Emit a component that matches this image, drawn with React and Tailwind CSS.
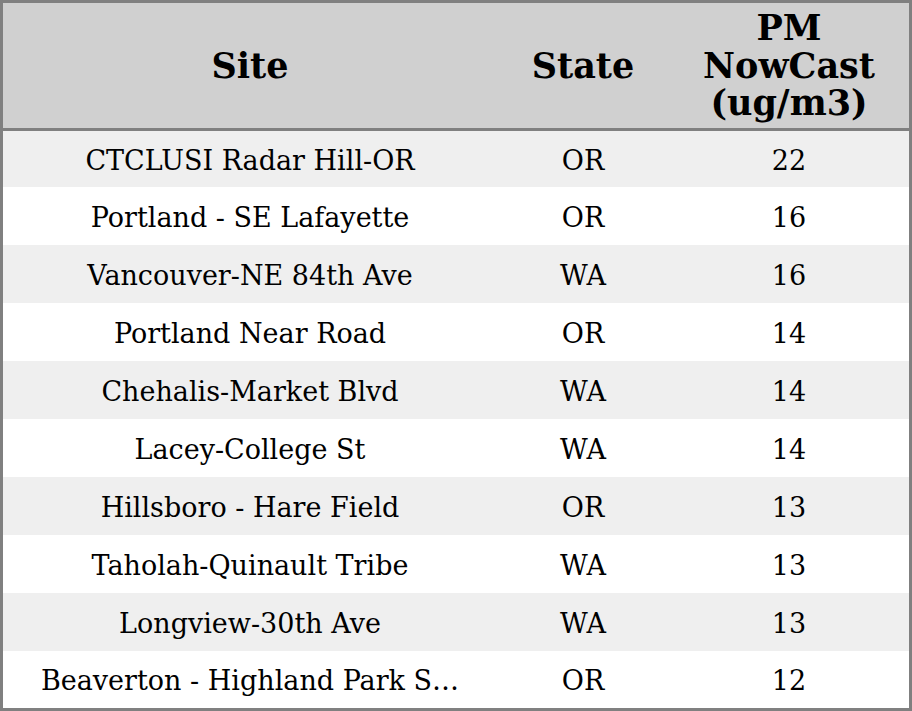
import React from "react";

const rows = [
  ["CTCLUSI Radar Hill-OR", "OR", "22"],
  ["Portland - SE Lafayette", "OR", "16"],
  ["Vancouver-NE 84th Ave", "WA", "16"],
  ["Portland Near Road", "OR", "14"],
  ["Chehalis-Market Blvd", "WA", "14"],
  ["Lacey-College St", "WA", "14"],
  ["Hillsboro - Hare Field", "OR", "13"],
  ["Taholah-Quinault Tribe", "WA", "13"],
  ["Longview-30th Ave", "WA", "13"],
  ["Beaverton - Highland Park S…", "OR", "12"],
];

const heights = ["h-[56px]", "h-[58px]", "h-[58px]", "h-[58px]", "h-[58px]", "h-[58px]", "h-[58px]", "h-[58px]", "h-[58px]", "h-[57px]"];

export default function App() {
  return (
    <div className="w-[912px] h-[711px] border-[3px] border-[#808080] bg-white text-black font-['DejaVu_Serif',serif] overflow-hidden">
      <div className="grid grid-cols-[494px_172px_240px] h-[128px] bg-[#d0d0d0] border-b-[3px] border-[#808080] text-[35px] font-bold leading-[37.5px]">
        <div className="flex items-center justify-center text-center">Site</div>
        <div className="flex items-center justify-center text-center">State</div>
        <div className="flex items-center justify-center text-center">
          <div>PM<br />NowCast<br />(ug/m3)</div>
        </div>
      </div>
      {rows.map((r, i) => (
        <div
          key={i}
          className={`grid grid-cols-[494px_172px_240px] text-[27px] leading-[32px] pt-[3px] ${heights[i]} ${i % 2 === 0 ? "bg-[#efefef]" : "bg-white"}`}
        >
          <div className="flex items-center justify-center whitespace-nowrap">{r[0]}</div>
          <div className="flex items-center justify-center">{r[1]}</div>
          <div className="flex items-center justify-center">{r[2]}</div>
        </div>
      ))}
    </div>
  );
}
